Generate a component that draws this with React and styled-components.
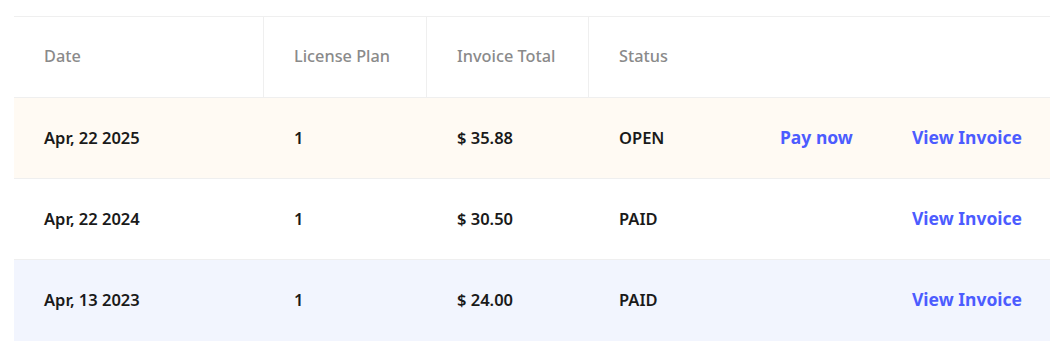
import React from 'react';
import styled, { createGlobalStyle } from 'styled-components';

const GlobalStyle = createGlobalStyle`
  body {
    margin: 0;
    background: #ffffff;
    font-family: "Noto Sans", "Open Sans", sans-serif;
  }
`

const Wrapper = styled.div`
  padding: 16px 0 0 14px;
`

const Table = styled.div`
  display: flex;
  flex-direction: column;
  border-top: 1px solid #efefef;
`

const Row = styled.div`
  display: grid;
  grid-template-columns: 250px 163px 162px 1fr 132px 168px;
  height: 80px;
  background: ${props => props.bg || '#ffffff'};
  border-bottom: 1px solid ${props => props.last ? 'transparent' : '#efefef'};
`

const HeadCell = styled.div`
  display: flex;
  align-items: center;
  padding: 0 30px 2px;
  font-size: 16.3px;
  font-weight: 500;
  color: #8a8a8a;
  border-right: ${props => props.divider ? '1px solid #efefef' : 'none'};
`

const Cell = styled.div`
  display: flex;
  align-items: center;
  padding: 0 30px 2px;
  font-size: 16.5px;
  font-weight: 600;
  color: #1a1a1a;
`

const LinkCell = styled.a`
  display: flex;
  align-items: center;
  padding: 0 28px 2px 30px;
  font-size: 17.5px;
  font-weight: 700;
  color: #4c5cff;
  text-decoration: none;
  white-space: nowrap;
  cursor: pointer;
`

const invoices = [
  { date: 'Apr, 22 2025', plan: '1', total: '$ 35.88', status: 'OPEN', bg: '#fffaf3', pay: true },
  { date: 'Apr, 22 2024', plan: '1', total: '$ 30.50', status: 'PAID', bg: '#ffffff' },
  { date: 'Apr, 13 2023', plan: '1', total: '$ 24.00', status: 'PAID', bg: '#f2f5fe' },
]

const App = () => {
  return (
    <Wrapper>
      <GlobalStyle />
      <Table>
        <Row>
          <HeadCell divider>Date</HeadCell>
          <HeadCell divider>License Plan</HeadCell>
          <HeadCell divider>Invoice Total</HeadCell>
          <HeadCell>Status</HeadCell>
          <HeadCell />
          <HeadCell />
        </Row>
        {invoices.map((inv, i) => (
          <Row key={inv.date} bg={inv.bg} last={i === invoices.length - 1}>
            <Cell>{inv.date}</Cell>
            <Cell>{inv.plan}</Cell>
            <Cell>{inv.total}</Cell>
            <Cell>{inv.status}</Cell>
            {inv.pay ? <LinkCell>Pay now</LinkCell> : <Cell />}
            <LinkCell>View Invoice</LinkCell>
          </Row>
        ))}
      </Table>
    </Wrapper>
  )
}

export default App;
